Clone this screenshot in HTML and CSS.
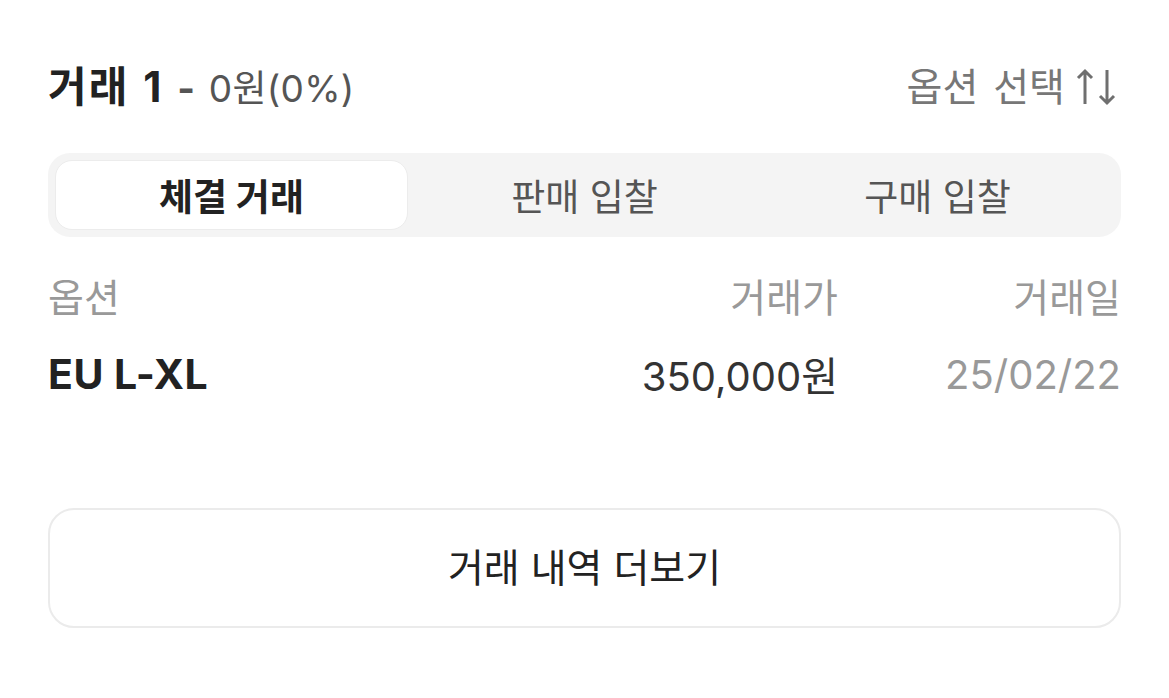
FILE: index.html
```html
<!DOCTYPE html>
<html lang="ko">
<head>
<meta charset="utf-8">
<link rel="stylesheet" href="styles.css">
</head>
<body>
<div class="page">
  <div class="title-row">
    <div class="title"><span class="title-main">거래 1</span> <span class="title-dash">-</span> <span class="title-sub">0원(0%)</span></div>
    <div class="option-select">옵션 선택
      <svg class="sort-icon" width="42" height="40" viewBox="0 0 42 40" fill="none" stroke="#6f6f6f" stroke-width="3" stroke-linecap="butt" stroke-linejoin="miter">
        <path d="M9 37V4M2 11L9 4L16 11"/>
        <path d="M31 3V36M24 29L31 36L38 29"/>
      </svg>
    </div>
  </div>
  <div class="tabs">
    <div class="tab active">체결 거래</div>
    <div class="tab">판매 입찰</div>
    <div class="tab">구매 입찰</div>
  </div>
  <div class="table">
    <div class="row head">
      <div class="c-opt">옵션</div>
      <div class="c-price">거래가</div>
      <div class="c-date">거래일</div>
    </div>
    <div class="row data">
      <div class="c-opt opt-val">EU L-XL</div>
      <div class="c-price price-val">350,000원</div>
      <div class="c-date date-val">25/02/22</div>
    </div>
  </div>
  <div class="more-btn">거래 내역 더보기</div>
</div>
</body>
</html>
```

FILE: styles.css
```css
* { box-sizing: border-box; }
html, body { margin: 0; padding: 0; background: #fff; }
body {
  font-family: Inter, "Noto Sans CJK KR", sans-serif;
  color: #222;
}
.page {
  padding: 0 48px;
  width: 1169px;
}
.title-row {
  height: 153px;
  padding-top: 63px;
  display: flex;
  justify-content: space-between;
  align-items: flex-start;
}
.title {
  font-size: 42px;
  line-height: 48px;
  white-space: nowrap;
  word-spacing: 2px;
}
.title-main { font-weight: 700; color: #222; letter-spacing: 2px; }
.title-dash { font-weight: 700; color: #555; font-size: 38px; }
.title-sub { font-size: 37px; color: #555; letter-spacing: 0.3px; }
.option-select {
  display: flex;
  align-items: center;
  font-size: 39px;
  line-height: 48px;
  color: #777;
  gap: 11px;
  padding-right: 3px;
  word-spacing: 4px;
}
.sort-icon { display: block; margin-top: 0; }
.tabs {
  height: 84px;
  background: #f4f4f4;
  border-radius: 22px;
  padding: 7px;
  display: grid;
  grid-template-columns: 1fr 1fr 1fr;
}
.tab {
  display: flex;
  align-items: center;
  justify-content: center;
  font-size: 37px;
  color: #555;
  border-radius: 17px;
}
.tab.active {
  background: #fff;
  color: #222;
  font-weight: 700;
  border: 1px solid #ececec;
}
.table {
  padding-top: 30px;
}
.row {
  display: grid;
  grid-template-columns: 1fr 300px 283px;
  align-items: center;
}
.row.head {
  height: 48px;
  font-size: 39px;
  color: #999;
}
.row.data {
  height: 48px;
  margin-top: 30px;
  font-size: 40px;
}
.c-price, .c-date { text-align: right; }
.opt-val { font-weight: 700; color: #222; font-size: 41px; letter-spacing: 0.5px; }
.price-val { color: #333; }
.date-val { color: #999; }
.more-btn {
  margin-top: 115px;
  height: 120px;
  border: 2px solid #ebebeb;
  border-radius: 26px;
  display: flex;
  align-items: center;
  justify-content: center;
  font-size: 39px;
  color: #222;
  padding-bottom: 6px;
}
```
